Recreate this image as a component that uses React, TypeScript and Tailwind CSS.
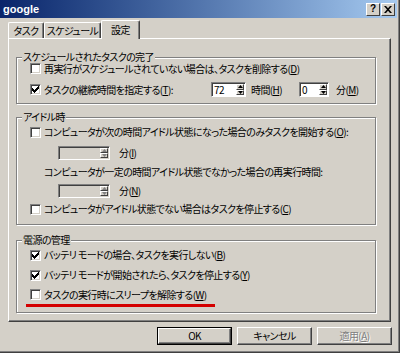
import React from 'react';

const jp = "font-['Noto_Sans_CJK_JP','Noto_Sans_CJK_SC',sans-serif] [font-feature-settings:'palt']";

function Check({ checked }: { checked?: boolean }) {
    return (
        <span className="flex h-[11px] w-[11px] shrink-0 items-center justify-center border border-t-[#808080] border-l-[#808080] border-r-white border-b-white bg-white shadow-[inset_1px_1px_0_#404040,inset_-1px_-1px_0_#d4d0c8]">
            {checked && (
                <svg width="7" height="7" viewBox="0 0 7 7">
                    <path d="M0 2h1v1h1v1h1V3h1V2h1V1h1V0h1v3H6v1H5v1H4v1H3v1H2V6H1V5H0z" fill="#000" />
                </svg>
            )}
        </span>
    );
}

function Arrow({ up, disabled }: { up?: boolean; disabled?: boolean }) {
    return (
        <span className="flex flex-1 items-center justify-center border border-t-white border-l-white border-r-[#404040] border-b-[#404040] bg-[#d4d0c8]">
            <svg width="5" height="3" viewBox="0 0 5 3">
                <path d={up ? 'M2.5 0L5 3H0z' : 'M0 0h5L2.5 3z'} fill={disabled ? '#808080' : '#000'} />
            </svg>
        </span>
    );
}

function Spin({ value, className, disabled }: { value?: string; className: string; disabled?: boolean }) {
    return (
        <div className={`flex border border-t-[#808080] border-l-[#808080] border-r-white border-b-white shadow-[inset_1px_1px_0_#404040] ${disabled ? 'bg-[#d4d0c8]' : 'bg-white'} ${className}`}>
            <span className="flex flex-1 items-center pl-[2px] pt-[1px] leading-none">{value}</span>
            <span className="flex w-[9px] flex-col py-[1px] pr-[1px]">
                <Arrow up disabled={disabled} />
                <Arrow disabled={disabled} />
            </span>
        </div>
    );
}

function Group({ title, className, children }: { title: string; className: string; children: React.ReactNode }) {
    return (
        <div className={`relative w-[360px] border border-[#808080] shadow-[inset_1px_1px_0_#fff,1px_1px_0_#fff] ${className}`}>
            <span className="absolute left-[5px] top-[-6px] bg-[#d4d0c8] px-[1px] leading-[10px]">{title}</span>
            {children}
        </div>
    );
}

function CheckRow({ checked, children, className }: { checked?: boolean; children: React.ReactNode; className: string }) {
    return (
        <div className={`flex items-center pl-[13px] ${className}`}>
            <Check checked={checked} />
            <span className="ml-[3px] whitespace-nowrap leading-none">{children}</span>
        </div>
    );
}

function Button({ children, primary, disabled }: { children: React.ReactNode; primary?: boolean; disabled?: boolean }) {
    return (
        <div className={`h-[18px] w-[75px] ${primary ? 'border border-black' : ''}`}>
            <div className="flex h-full w-full items-center justify-center border border-t-white border-l-white border-r-[#404040] border-b-[#404040] shadow-[inset_-1px_-1px_0_#808080]">
                <span className={`leading-none ${disabled ? 'text-[#808080] [text-shadow:1px_1px_0_#fff]' : 'text-black'}`}>{children}</span>
            </div>
        </div>
    );
}

function Tab({ children, className, active }: { children: React.ReactNode; className: string; active?: boolean }) {
    return (
        <div className={`flex items-center justify-center rounded-t-[2px] border-l border-t border-r border-l-white border-t-white border-r-[#404040] bg-[#d4d0c8] shadow-[inset_-1px_0_0_#808080] ${active ? 'relative z-10 -mb-px h-[19px] pb-[1px]' : 'h-[16px] pt-[1px]'} ${className}`}>
            <span className="whitespace-nowrap leading-none">{children}</span>
        </div>
    );
}

export default function App() {
    return (
        <div className={`flex h-[353px] w-[400px] flex-col overflow-hidden border-r border-b border-[#404040] bg-[#d4d0c8] text-[10px] tracking-[-0.6px] text-black shadow-[inset_-1px_-1px_0_#808080] ${jp}`}>
            {/* title bar */}
            <div className="mr-[2px] flex h-[18px] shrink-0 items-center justify-between bg-gradient-to-r from-[#0a246a] to-[#a6caf0] pl-[3px] pr-[2px]">
                <span className="font-['Liberation_Sans',sans-serif] text-[11px] font-bold leading-none tracking-normal text-white">google</span>
                <div className="flex gap-[1px]">
                    <div className="flex h-[13px] w-[14px] items-center justify-center border border-t-white border-l-white border-r-[#404040] border-b-[#404040] bg-[#d4d0c8] font-['Liberation_Sans',sans-serif] text-[10px] font-bold leading-none tracking-normal">?</div>
                    <div className="flex h-[13px] w-[14px] items-center justify-center border border-t-white border-l-white border-r-[#404040] border-b-[#404040] bg-[#d4d0c8]">
                        <svg width="8" height="7" viewBox="0 0 8 7">
                            <path d="M0 0h2l2 2.3L6 0h2L5 3.5 8 7H6L4 4.7 2 7H0l3-3.5z" fill="#000" />
                        </svg>
                    </div>
                </div>
            </div>

            {/* tabs */}
            <div className="flex h-[20px] shrink-0 items-end pl-[8px]">
                <Tab className="w-[36px]">タスク</Tab>
                <Tab className="w-[57px]">スケジュール</Tab>
                <Tab className="w-[39px]" active>設定</Tab>
            </div>

            {/* panel */}
            <div className="ml-[8px] h-[284px] w-[383px] shrink-0 border border-l-white border-t-white border-r-[#404040] border-b-[#404040] pl-[7px] pt-[18px] shadow-[inset_-1px_-1px_0_#808080]">
                <Group title="スケジュールされたタスクの完了" className="h-[47px]">
                    <CheckRow className="h-[21px]">
                        再実行がスケジュールされていない場合は、タスクを削除する(<u>D</u>)
                    </CheckRow>
                    <div className="flex h-[21px] items-center pl-[13px]">
                        <Check checked />
                        <span className="ml-[3px] w-[167px] whitespace-nowrap leading-none">タスクの継続時間を指定する(<u>T</u>):</span>
                        <Spin value="72" className="h-[15px] w-[35px]" />
                        <span className="ml-[5px] w-[48px] leading-none">時間(<u>H</u>)</span>
                        <Spin value="0" className="h-[15px] w-[30px]" />
                        <span className="ml-[7px] leading-none">分(<u>M</u>)</span>
                    </div>
                </Group>

                <Group title="アイドル時" className="mt-[13px] h-[108px] pt-[4px]">
                    <CheckRow className="h-[20px]">
                        コンピュータが次の時間アイドル状態になった場合のみタスクを開始する(<u>O</u>):
                    </CheckRow>
                    <div className="flex h-[21px] items-center pl-[41px]">
                        <Spin disabled className="h-[14px] w-[52px]" />
                        <span className="ml-[9px] leading-none">分(<u>I</u>)</span>
                    </div>
                    <div className="flex h-[18px] items-center pl-[27px]">
                        <span className="whitespace-nowrap leading-none">コンピュータが一定の時間アイドル状態でなかった場合の再実行時間:</span>
                    </div>
                    <div className="flex h-[19px] items-center pl-[41px]">
                        <Spin disabled className="h-[14px] w-[52px]" />
                        <span className="ml-[9px] leading-none">分(<u>N</u>)</span>
                    </div>
                    <CheckRow className="h-[18px]">
                        コンピュータがアイドル状態でない場合はタスクを停止する(<u>C</u>)
                    </CheckRow>
                </Group>

                <Group title="電源の管理" className="mt-[15px] h-[73px] pt-[4px]">
                    <CheckRow checked className="h-[20px]">
                        バッテリ モードの場合、タスクを実行しない(<u>B</u>)
                    </CheckRow>
                    <CheckRow checked className="h-[20px]">
                        バッテリ モードが開始されたら、タスクを停止する(<u>Y</u>)
                    </CheckRow>
                    <CheckRow className="h-[19px]">
                        タスクの実行時にスリープを解除する(<u>W</u>)
                    </CheckRow>
                    <div className="ml-[9px] h-[3px] w-[189px] bg-[#d40000]" />
                </Group>
            </div>

            {/* buttons */}
            <div className="mt-[5px] flex justify-end gap-[5px] pr-[7px]">
                <Button primary>OK</Button>
                <Button>キャンセル</Button>
                <Button disabled>適用(<u>A</u>)</Button>
            </div>
        </div>
    );
}
